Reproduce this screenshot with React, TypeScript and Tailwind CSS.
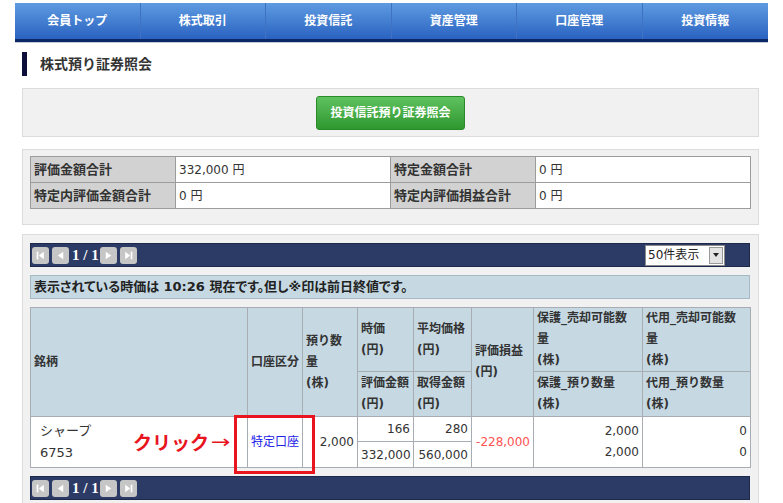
import React from 'react';

const navItems = ['会員トップ', '株式取引', '投資信託', '資産管理', '口座管理', '投資情報'];

const font = "font-['DejaVu_Sans','Noto_Sans_CJK_JP',sans-serif]";

function PagerButton({ kind }: { kind: 'first' | 'prev' | 'next' | 'last' }) {
  return (
    <div className="w-[17px] h-[17px] rounded-[3px] bg-[#c6c6c6] flex items-center justify-center">
      <svg width="11" height="11" viewBox="0 0 10 10">
        {kind === 'first' && (
          <>
            <rect x="1.5" y="1.5" width="1.5" height="7" fill="#fff" />
            <path d="M8 1.5 L3.5 5 L8 8.5 Z" fill="#fff" />
          </>
        )}
        {kind === 'prev' && <path d="M7.5 1.5 L2.5 5 L7.5 8.5 Z" fill="#fff" />}
        {kind === 'next' && <path d="M2.5 1.5 L7.5 5 L2.5 8.5 Z" fill="#fff" />}
        {kind === 'last' && (
          <>
            <path d="M2 1.5 L6.5 5 L2 8.5 Z" fill="#fff" />
            <rect x="7" y="1.5" width="1.5" height="7" fill="#fff" />
          </>
        )}
      </svg>
    </div>
  );
}

function Pager({ withSelect }: { withSelect?: boolean }) {
  return (
    <div className="w-[720px] h-[24px] bg-[#2c3b66] border border-[#1c284c] flex items-center pl-[1px] pr-[24px]">
      <div className="flex items-center gap-[3px]">
        <PagerButton kind="first" />
        <PagerButton kind="prev" />
      </div>
      <span className="text-white text-[15px] font-bold font-['Liberation_Serif',serif] pl-[3px] pr-[1px]">1 / 1</span>
      <div className="flex items-center gap-[3px]">
        <PagerButton kind="next" />
        <PagerButton kind="last" />
      </div>
      {withSelect && (
        <div className="ml-auto w-[80px] h-[21px] bg-white border border-[#8a8a8a] flex items-center">
          <span className={`flex-1 pl-[2px] text-[12px] text-[#222] ${font}`}>50件表示</span>
          <div className="w-[14px] h-[17px] mr-[1px] bg-[#e4e4e4] border border-[#9a9a9a] flex items-center justify-center">
            <svg width="6" height="4" viewBox="0 0 6 4">
              <path d="M0 0 L6 0 L3 4 Z" fill="#222" />
            </svg>
          </div>
        </div>
      )}
    </div>
  );
}

export default function App() {
  const th = 'border border-[#a7adb2] bg-[#c6d9e3] text-left align-middle px-[3px] font-bold text-[12px] leading-[21px] text-[#333]';
  const td = 'border border-[#a7adb2] bg-white text-[12px] text-[#333] px-[3px]';
  const label = 'border border-[#9c9c9c] bg-[#d2d2d2] px-[3px] text-[13px] font-bold';
  const value = 'border border-[#9c9c9c] bg-white px-[3px] text-[12px]';
  return (
    <div className={`min-h-[503px] bg-white ${font} text-[#333]`}>
      {/* Global Nav */}
      <div className="ml-[15px] mt-[3px] w-[753px] grid grid-cols-6 bg-linear-to-b from-[#5f9be1] to-[#2a62c0] border-b-[3px] border-[#0c2766] shadow-[0_1px_0_#c4cbd8]">
        {navItems.map((item, i) => (
          <div
            key={item}
            className={`h-[36px] flex items-center justify-center text-white text-[12px] font-bold ${
              i < navItems.length - 1 ? 'border-r border-[#3f72c2]' : ''
            }`}
          >
            {item}
          </div>
        ))}
      </div>

      {/* Page Title */}
      <div className="ml-[22px] mt-[10px] flex items-center gap-[13px] h-[24px]">
        <div className="w-[5px] h-[24px] bg-[#0d0f3a]" />
        <h1 className="text-[14px] font-bold text-[#333]">株式預り証券照会</h1>
      </div>

      {/* Fund Button Box */}
      <div className="ml-[22px] mt-[12px] w-[737px] h-[49px] bg-[#f1f1f1] border border-[#dcdcdc] flex items-center justify-center">
        <button className="w-[149px] h-[34px] rounded-[3px] bg-linear-to-b from-[#5ec25e] to-[#2e982e] border border-[#2a8a2a] text-white text-[12px] font-bold">
          投資信託預り証券照会
        </button>
      </div>

      {/* Summary Box */}
      <div className="ml-[22px] mt-[12px] w-[737px] bg-[#f1f1f1] border border-[#dcdcdc] px-[7px] pt-[6px] pb-[15px]">
        <table className="w-[720px] border-collapse table-fixed">
          <colgroup>
            <col className="w-[145px]" />
            <col className="w-[215px]" />
            <col className="w-[145px]" />
            <col className="w-[215px]" />
          </colgroup>
          <tbody>
            <tr className="h-[26px]">
              <td className={label}>評価金額合計</td>
              <td className={value}>332,000 円</td>
              <td className={label}>特定金額合計</td>
              <td className={value}>0 円</td>
            </tr>
            <tr className="h-[26px]">
              <td className={label}>特定内評価金額合計</td>
              <td className={value}>0 円</td>
              <td className={label}>特定内評価損益合計</td>
              <td className={value}>0 円</td>
            </tr>
          </tbody>
        </table>
      </div>

      {/* Holdings Box */}
      <div className="relative ml-[22px] mt-[9px] w-[737px] bg-[#f1f1f1] border border-[#dcdcdc] px-[7px] pt-[8px] pb-[6px] flex flex-col gap-[8px]">
        <Pager withSelect />

        <div className="w-[720px] h-[24px] bg-[#c6d9e3] border border-[#a7b9c4] flex items-center px-[3px] text-[13px] font-bold text-[#222] [font-feature-settings:'palt']">
          表示されている時価は 10:26 現在です。但し※印は前日終値です。
        </div>

        <table className="w-[720px] border-collapse table-fixed">
          <colgroup>
            <col className="w-[217px]" />
            <col className="w-[55px]" />
            <col className="w-[55px]" />
            <col className="w-[56px]" />
            <col className="w-[58px]" />
            <col className="w-[62px]" />
            <col className="w-[109px]" />
            <col className="w-[108px]" />
          </colgroup>
          <thead>
            <tr className="h-[64px]">
              <th rowSpan={2} className={th}>銘柄</th>
              <th rowSpan={2} className={th}>口座区分</th>
              <th rowSpan={2} className={th}>預り数<br />量<br />(株)</th>
              <th className={th}>時価<br />(円)</th>
              <th className={th}>平均価格<br />(円)</th>
              <th rowSpan={2} className={th}>評価損益<br />(円)</th>
              <th className={th}>保護_売却可能数<br />量<br />(株)</th>
              <th className={th}>代用_売却可能数<br />量<br />(株)</th>
            </tr>
            <tr className="h-[45px]">
              <th className={th}>評価金額<br />(円)</th>
              <th className={th}>取得金額<br />(円)</th>
              <th className={th}>保護_預り数量<br />(株)</th>
              <th className={th}>代用_預り数量<br />(株)</th>
            </tr>
          </thead>
          <tbody>
            <tr className="h-[25px]">
              <td rowSpan={2} className={`${td} pl-[9px] text-[13px] leading-[22px]`}>
                シャープ<br />6753
              </td>
              <td rowSpan={2} className={`${td} text-center text-[#2323e6]`}>特定口座</td>
              <td rowSpan={2} className={`${td} text-right`}>2,000</td>
              <td className={`${td} text-right`}>166</td>
              <td className={`${td} text-right`}>280</td>
              <td rowSpan={2} className={`${td} text-right text-[#ff5252]`}>-228,000</td>
              <td rowSpan={2} className={`${td} text-right leading-[21px]`}>2,000<br />2,000</td>
              <td rowSpan={2} className={`${td} text-right leading-[21px]`}>0<br />0</td>
            </tr>
            <tr className="h-[26px]">
              <td className={`${td} text-right`}>332,000</td>
              <td className={`${td} text-right`}>560,000</td>
            </tr>
          </tbody>
        </table>

        <Pager />

        {/* Annotation overlay */}
        <div className="absolute left-[110px] top-[197px] flex items-center text-[#e8141e] leading-none">
          <span className="text-[19px] font-bold font-['Noto_Sans_CJK_JP',sans-serif]">クリック</span>
          <span className="text-[18px] font-['DejaVu_Sans',sans-serif] scale-x-[1.3] ml-[4px]">→</span>
        </div>
        <div className="absolute left-[211px] top-[180px] w-[81px] h-[59px] border-[3px] border-[#e8141e]" />
      </div>
    </div>
  );
}
